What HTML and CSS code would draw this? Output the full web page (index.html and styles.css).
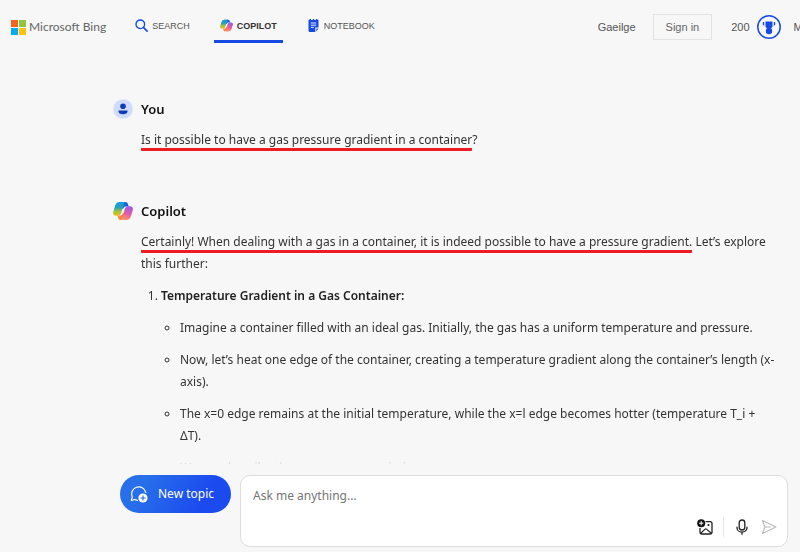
FILE: index.html
```html
<!DOCTYPE html>
<html lang="en">
<head>
<meta charset="utf-8">
<meta name="viewport" content="width=device-width, initial-scale=1">
<title>Microsoft Bing Copilot</title>
<link rel="stylesheet" href="styles.css">
</head>
<body>
<svg class="defs" aria-hidden="true">
  <defs>
    <linearGradient id="cp-left" x1="0" y1="0" x2="0" y2="1"><stop offset="0" stop-color="#159be8"/><stop offset=".4" stop-color="#2a9fb5"/><stop offset=".7" stop-color="#a5c43c"/><stop offset="1" stop-color="#f6b51e"/></linearGradient>
    <linearGradient id="cp-right" x1=".6" y1="0" x2=".3" y2="1"><stop offset="0" stop-color="#9b5be8"/><stop offset=".5" stop-color="#e45aa8"/><stop offset="1" stop-color="#ff9a60"/></linearGradient>
    <linearGradient id="cp-top" x1="0" y1="0" x2="1" y2="0"><stop offset="0" stop-color="#1aa4ee"/><stop offset="1" stop-color="#1748c8"/></linearGradient>
    <linearGradient id="cp-bottom" x1="0" y1="0" x2="1" y2="0"><stop offset="0" stop-color="#f7a326"/><stop offset="1" stop-color="#f2558a"/></linearGradient>
    <symbol id="copilot" viewBox="0 0 20 18">
      <path fill="url(#cp-top)" d="M6 0h6.500q1.800 0 2.400 2l.8 2.500H12.500Q11 4.500 10 7L7 6Z"/>
      <path fill="url(#cp-bottom)" d="M14 18H7.500q-1.800 0-2.400-2l-.8-2.500H7.500q1.700 0 2.500-2.500l3 1Z"/>
      <path fill="url(#cp-left)" d="M6.500 0H12.500Q11 .4 10.300 3L8.400 10.500Q7.500 13.800 4.500 13.800H2.500Q-.5 13.500.2 10L2.200 3.500Q3.300 0 6.500 0Z"/>
      <path fill="url(#cp-right)" d="M13.500 18H7.500q1.500-.4 2.200-3L11.600 7.500q.9-3.300 3.900-3.300h2Q20.500 4.500 19.800 8l-2 6.500Q16.700 18 13.500 18Z"/>
    </symbol>
  </defs>
</svg>

<header class="topbar">
  <a class="brand" href="#">
    <svg class="brand-mark" viewBox="0 0 15 15" aria-hidden="true"><path fill="#f26522" d="M0 0h7v7H0z"/><path fill="#8dc63f" d="M8 0h7v7H8z"/><path fill="#00aeef" d="M0 8h7v7H0z"/><path fill="#ffc20e" d="M8 8h7v7H8z"/></svg>
    <span>Microsoft Bing</span>
  </a>
  <nav class="tabs">
    <a class="tab" href="#"><svg class="tab-icon" viewBox="0 0 13 13" aria-hidden="true"><circle cx="5.300" cy="5.300" r="4.300" fill="none" stroke="#174ae4" stroke-width="1.400"/><path d="m8.400 8.400 3.700 3.700" stroke="#174ae4" stroke-width="1.600" stroke-linecap="round"/></svg>SEARCH</a>
    <a class="tab active" href="#" aria-current="page"><svg class="tab-icon" aria-hidden="true"><use href="#copilot"/></svg>COPILOT</a>
    <a class="tab" href="#"><svg class="tab-icon" viewBox="0 0 13 13" aria-hidden="true"><path fill="#174ae4" d="M1.500 1h1V0H4v1h1.800V0h1.400v1H9V0h1.500v1h1v7.500H8.300V13H3q-1.500 0-1.500-1.500ZM9.300 9.500h2.200L9.300 12.500Z"/><path d="M3.800 4h5.400M3.800 6.200h5.400M3.800 8.400h3" stroke="#fff" stroke-width=".9"/></svg>NOTEBOOK</a>
  </nav>
  <div class="account">
    <a class="language" href="#">Gaeilge</a>
    <button class="signin" type="button">Sign in</button>
    <a class="rewards" href="#">200
      <svg class="medal" viewBox="0 0 24 24" aria-hidden="true"><circle cx="12" cy="12" r="11.200" fill="none" stroke="#174ae4" stroke-width="1.500"/><path fill="#174ae4" d="M8.500 6.500h7V12l-2 1.500h-3l-2-1.500ZM5.800 7h1.400v4L5.800 9.800Zm12.400 0h-1.400v4l1.400-1.200Z"/><circle cx="12" cy="16" r="3.200" fill="#174ae4"/></svg>
    </a>
    <a class="mobile" href="#">Mobile</a>
  </div>
</header>

<main class="chat">
  <article class="turn">
    <h2 class="author"><svg class="avatar" viewBox="0 0 20 20" aria-hidden="true"><circle cx="10" cy="10" r="9.800" fill="#d1dbfa"/><circle cx="10" cy="7.200" r="2.800" fill="#123bb6"/><path fill="#123bb6" d="M5.500 11.500h9v.8q0 3-4.500 3t-4.500-3Z"/></svg>You</h2>
    <p><span class="marked">Is it possible to have a gas pressure gradient in a container</span>?</p>
  </article>
  <article class="turn">
    <h2 class="author"><svg class="avatar" aria-hidden="true"><use href="#copilot"/></svg>Copilot</h2>
    <p><span class="marked">Certainly! When dealing with a gas in a container, it is indeed possible to have a pressure gradient.</span> Let’s explore this further:</p>
    <ol>
      <li><strong>Temperature Gradient in a Gas Container:</strong>
        <ul>
          <li>Imagine a container filled with an ideal gas. Initially, the gas has a uniform temperature and pressure.</li>
          <li>Now, let’s heat one edge of the container, creating a temperature gradient along the container’s length (x-axis).</li>
          <li>The x=0 edge remains at the initial temperature, while the x=l edge becomes hotter (temperature T_i + ΔT).</li>
          <li>We can describe the temperature variation</li>
        </ul>
      </li>
    </ol>
  </article>
</main>

<form class="composer">
  <button class="new-topic" type="button">
    <svg class="topic-icon" viewBox="0 0 18 18" fill="none" aria-hidden="true"><path d="M7.500 15.300q-1.500-.1-2.700-.8L1.300 15.500l1-3.300A7.200 7.200 0 1 1 15.800 7.500" stroke="#fff" stroke-width="1.200" stroke-linejoin="round" stroke-linecap="round"/><circle cx="13" cy="13" r="4.600" fill="#fff"/><path d="M13 10.500v5M10.500 13h5" stroke="#2563e8" stroke-width="1.100"/></svg>
    New topic
  </button>
  <div class="prompt">
    <textarea class="prompt-text" rows="1" placeholder="Ask me anything..." aria-label="Ask me anything"></textarea>
    <div class="tools">
      <button class="tool" type="button" aria-label="Add an image"><svg viewBox="0 0 16 16" fill="none" aria-hidden="true"><path d="M8.500 2.600H13q2 0 2 2V13q0 2-2 2H5q-2 0-2-2V9" stroke="#222" stroke-width="1.300"/><path d="m4 14 3.800-3.600q1-.9 2 0L14 14" stroke="#222" stroke-width="1.200"/><circle cx="11.500" cy="6" r="1.100" fill="#222"/><circle cx="4.200" cy="4.200" r="4" fill="#111"/><path d="M4.200 2v4.400M2 4.200h4.400" stroke="#fff"/></svg></button>
      <span class="divider"></span>
      <button class="tool" type="button" aria-label="Use microphone"><svg viewBox="0 0 16 16" fill="none" stroke="#222" stroke-width="1.300" stroke-linecap="round" aria-hidden="true"><rect x="5.200" y="1" width="5.600" height="10" rx="2.800"/><path d="M3 8.200v.5a5 4.500 0 0 0 10 0v-.5M8 13.300v2"/></svg></button>
      <button class="tool send" type="submit" aria-label="Submit"><svg viewBox="0 0 16 16" fill="none" stroke="#bbb" stroke-width="1.200" stroke-linejoin="round" aria-hidden="true"><path d="m1.500 1.500 13.300 6.500-13.300 6.500L3.800 8ZM3.800 8h6"/></svg></button>
    </div>
  </div>
</form>
</body>
</html>
```
FILE: styles.css
```css
* { box-sizing: border-box; }

body {
  display: flex;
  flex-direction: column;
  height: 100vh;
  margin: 0;
  overflow: hidden;
  background: #f7f7f7;
  color: #333;
  font: 12px/22px "Noto Sans", "Open Sans", sans-serif;
}

a { color: inherit; text-decoration: none; }
button { font: inherit; border: 0; padding: 0; cursor: pointer; }
.defs { position: absolute; width: 0; height: 0; }

.topbar {
  display: flex;
  align-items: center;
  flex: none;
  height: 54px;
  padding-left: 11px;
  overflow: hidden;
  white-space: nowrap;
  color: #555;
  font-family: "Liberation Sans", Arial, sans-serif;
  font-size: 11px;
}

.brand {
  display: flex;
  align-items: center;
  gap: 3px;
  color: #666;
  font: 12px/16px Lato, sans-serif;
}
.brand-mark { width: 15px; height: 15px; }

.tabs { display: flex; gap: 24px; margin-left: 29px; }
.tab {
  display: flex;
  align-items: center;
  gap: 4px;
  height: 32px;
  font-size: 9px;
  border-bottom: 3px solid transparent;
}
.tab.active { padding: 0 6px; border-color: #174ae4; color: #333; font-weight: bold; }
.tab-icon { width: 13px; height: 13px; }

.account { display: flex; align-items: center; margin-left: auto; margin-right: -26px; }
.signin {
  height: 26px;
  margin: 0 19px 0 17px;
  padding: 0 12px;
  border: 1px solid #e3e3e3;
  background: transparent;
  color: #666;
}
.rewards { display: flex; align-items: center; gap: 7px; }
.medal { width: 24px; height: 24px; }
.mobile { margin-left: 13px; }

.chat {
  flex: 1;
  min-height: 0;
  overflow: hidden;
  padding: 44px 23px 0 113px;
  -webkit-mask-image: linear-gradient(to top, rgb(0 0 0 / 0.1), #000 20px);
  mask-image: linear-gradient(to top, rgb(0 0 0 / 0.1), #000 20px);
}

.turn { padding-left: 28px; margin-bottom: 49px; }
.author {
  display: flex;
  align-items: center;
  gap: 8px;
  margin: 0 0 9px -28px;
  color: #111;
  font-size: 13px;
  line-height: 22px;
  font-weight: 600;
}
.avatar { width: 20px; height: 20px; }

p { margin: 0 0 10px; }
.marked { border-bottom: 3px solid #ed1c24; border-radius: 1px; }

strong { color: #222; font-weight: 600; }
ol { margin: 0; padding-left: 20px; }
ul { margin: 10px 0 0; padding-left: 19px; list-style: circle; }
ul li { margin-bottom: 10px; }

.composer {
  display: flex;
  flex: none;
  gap: 9px;
  align-items: flex-start;
  padding: 11px 12px 5px 120px;
}
.new-topic {
  display: flex;
  align-items: center;
  gap: 10px;
  height: 38px;
  padding: 0 17px 0 10px;
  border-radius: 19px;
  background: linear-gradient(120deg, #2870ea 20%, #1b4aef 75%);
  color: #fff;
  white-space: nowrap;
}
.topic-icon { width: 18px; height: 18px; }

.prompt {
  flex: 1;
  min-width: 0;
  height: 72px;
  padding: 9px 9px 4px 12px;
  border: 1px solid #ddd;
  border-radius: 10px;
  background: #fff;
}
.prompt-text {
  display: block;
  width: 100%;
  height: 22px;
  padding: 0;
  border: 0;
  outline: 0;
  resize: none;
  overflow: hidden;
  background: transparent;
  font: inherit;
}
.prompt-text::placeholder { color: #767676; }

.tools { display: flex; align-items: center; justify-content: flex-end; margin-top: 10px; gap: 9px; }
.tool { width: 18px; height: 20px; background: transparent; }
.tool svg { display: block; width: 16px; height: 16px; margin: 0 auto; }
.divider { width: 1px; height: 20px; background: #e5e5e5; }
```
